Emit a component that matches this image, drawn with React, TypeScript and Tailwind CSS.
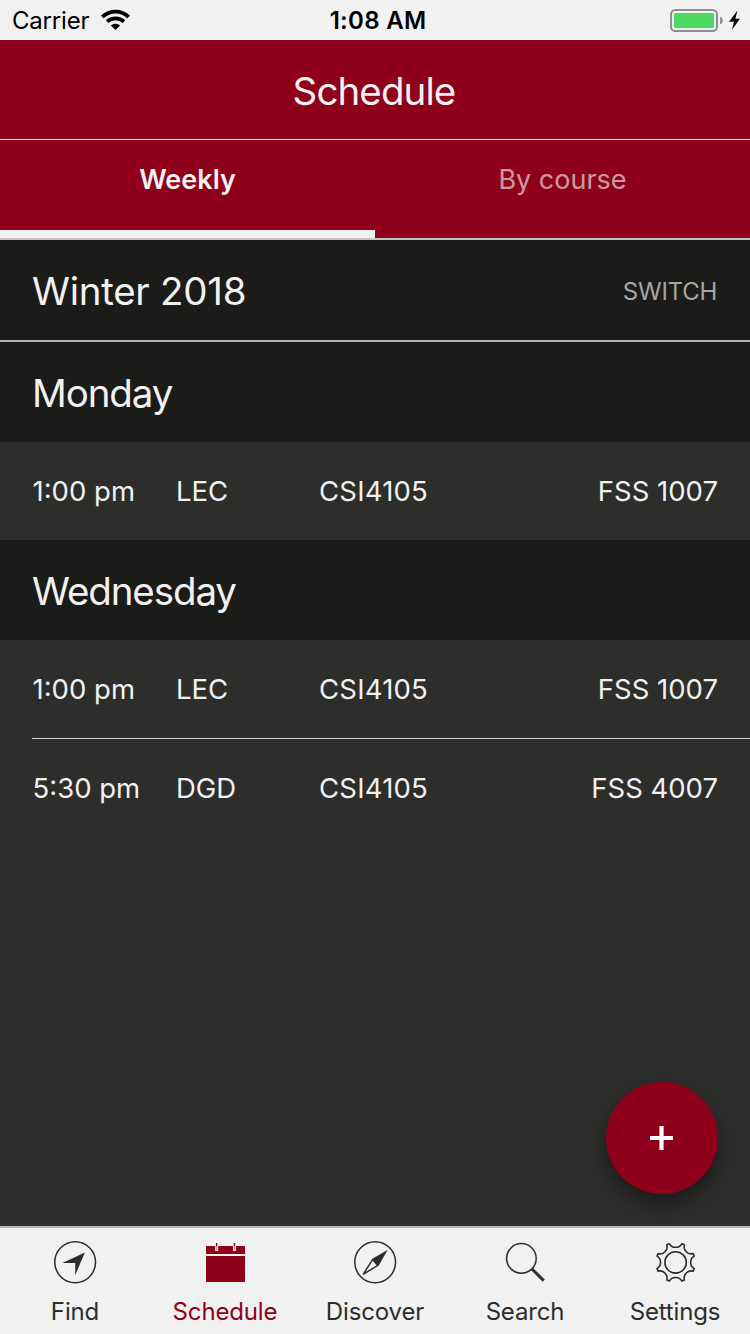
import React from "react";

type Meeting = { time: string; kind: string; course: string; room: string };

const gearPath = (() => {
  const point = (deg: number, r: number) => {
    const a = (deg * Math.PI) / 180;
    return `${(22.6 + r * Math.sin(a)).toFixed(2)} ${(21.4 - r * Math.cos(a)).toFixed(2)}`;
  };
  let d = `M${point(-18.5, 19.6)}`;
  for (let k = 0; k < 8; k++) {
    const v = k * 45;
    d += `Q${point(v - 15, 15.4)} ${point(v, 15.1)}Q${point(v + 15, 15.4)} ${point(v + 18.5, 19.6)}L${point(v + 26.5, 19.6)}`;
  }
  return d + "Z";
})();

function FindIcon() {
  return (
    <svg width="44" height="44" viewBox="0 0 44 44">
      <circle cx="22.15" cy="21.25" r="20.4" fill="none" stroke="#2d2d2c" strokeWidth="1.5" />
      <path d="M31.9 11.5 22.2 34.2V21.9H9.3Z" fill="#2d2d2c" />
    </svg>
  );
}

function CalendarIcon() {
  return (
    <svg width="44" height="44" viewBox="0 0 44 44">
      <path d="M3 5H42V13H3ZM3 15H42V41H3Z" fill="#8f001a" />
      <path d="M12.2 5h3v5h-3ZM30 5h3v5h-3Z" fill="#f1f1f1" />
      <path d="M13.1 5h1.2v4h-1.2ZM30.9 5h1.2v4h-1.2Z" fill="#8f001a" opacity="0.4" />
      <path d="M13 2h1.4v3H13ZM30.8 2h1.4v3h-1.4Z" fill="#8f001a" />
    </svg>
  );
}

function CompassIcon() {
  return (
    <svg width="44" height="44" viewBox="0 0 44 44">
      <circle cx="22.15" cy="21.25" r="20.4" fill="none" stroke="#2d2d2c" strokeWidth="1.5" />
      <path d="M34.8 8.8 25.6 24.8 22 21.5 18.6 18.2Z" fill="#2d2d2c" />
      <path d="M19.6 18.6 10.2 33.3 24.8 24.4 22.2 21.4Z" fill="none" stroke="#2d2d2c" strokeWidth="1.5" />
    </svg>
  );
}

function SearchIcon() {
  return (
    <svg width="44" height="44" viewBox="0 0 44 44">
      <circle cx="18.4" cy="17.4" r="14.8" fill="none" stroke="#2d2d2c" strokeWidth="1.5" />
      <path d="M28.9 28 40.7 39.6" stroke="#2d2d2c" strokeWidth="3" />
    </svg>
  );
}

function GearIcon() {
  return (
    <svg width="44" height="44" viewBox="0 0 44 44">
      <path d={gearPath} fill="none" stroke="#2d2d2c" strokeWidth="1.6" strokeLinejoin="round" />
      <circle cx="22.6" cy="21.4" r="10.7" fill="none" stroke="#2d2d2c" strokeWidth="1.6" />
    </svg>
  );
}

function StatusBar() {
  return (
    <header className="grid h-10 shrink-0 grid-cols-3 items-center bg-[#f1f1f1] text-black">
      <div className="flex items-center pl-3">
        <span className="pt-0.5 text-[24px] leading-[38px] tracking-[-0.2px]">Carrier</span>
        <svg className="ml-3" width="30" height="22" viewBox="0 0 30 22">
          <path d="M1.3 7.9C9 .8 20 .8 27.7 7.9" fill="none" stroke="black" strokeWidth="3.8" />
          <path d="M6 12.6C11 8.3 18 8.3 23 12.6" fill="none" stroke="black" strokeWidth="3.6" />
          <path d="M9.9 16.5C12.7 14.2 16.3 14.2 19.1 16.5L14.5 21Z" fill="black" />
        </svg>
      </div>
      <span className="pl-1.5 pt-0.5 text-center text-[24px] font-semibold leading-[38px] tracking-[0.3px]">1:08 AM</span>
      <div className="flex justify-end pr-2">
        <svg width="74" height="26" viewBox="0 0 74 26">
          <rect x="3" y="3" width="46" height="21" rx="4.5" fill="none" stroke="#8e8e8e" strokeWidth="2" />
          <rect x="6" y="6" width="40" height="15" rx="1.5" fill="#4cd964" />
          <path d="M52 9.5Q55 11 55 13.5T52 17.5Z" fill="#8e8e8e" />
          <path d="M69.5 3.5 61 14.8H66L64 22.8 72 11.8H67.3Z" fill="black" />
        </svg>
      </div>
    </header>
  );
}

function DayHeader({ name }: { name: string }) {
  return (
    <h2 className="h-[100px] bg-[#1b1b1a] px-8 text-[38.5px] font-normal leading-[102px] tracking-[-1.1px]">{name}</h2>
  );
}

function MeetingRow({ time, kind, course, room }: Meeting) {
  return (
    <div className="grid h-[98px] grid-cols-[144px_143px_1fr_auto] px-8 text-[27.5px] leading-[98px]">
      <span className="pl-[0.5px]">{time}</span>
      <span className="tracking-[-0.1px]">{kind}</span>
      <span className="tracking-[0.2px]">{course}</span>
      <span>{room}</span>
    </div>
  );
}

const tabs = [
  { label: "Find", Icon: FindIcon },
  { label: "Schedule", Icon: CalendarIcon, active: true },
  { label: "Discover", Icon: CompassIcon },
  { label: "Search", Icon: SearchIcon },
  { label: "Settings", Icon: GearIcon },
];

export default function App() {
  return (
    <div className="relative flex h-[1334px] w-[750px] flex-col overflow-hidden bg-[#2d2d2c] font-['Inter',sans-serif] text-[#f1f1f1]">
      <StatusBar />
      <h1 className="h-[100px] shrink-0 border-b border-[#f1f1f1] bg-[#8f001a] pr-0.5 text-center text-[38.5px] font-normal leading-[103px] tracking-[-0.9px]">
        Schedule
      </h1>
      <div className="grid h-[100px] shrink-0 grid-cols-2 border-b-2 border-[#c4c4c4] bg-[#8f001a] text-center text-[27px] leading-[79px]">
        <div className="border-b-8 border-[#f1f1f1] font-semibold">Weekly</div>
        <div className="text-[#f1f1f1]/65">By course</div>
      </div>
      <div className="flex h-[102px] shrink-0 items-center justify-between border-b-2 border-[#b4b4b4] bg-[#1b1b1a] px-8">
        <span className="pt-0.5 text-[38.5px] leading-[100px] tracking-[-0.27px]">Winter 2018</span>
        <span className="pt-[3px] pr-px text-[24px] tracking-[-0.25px] text-[#a6a6a5]">SWITCH</span>
      </div>
      <main className="flex-1">
        <DayHeader name="Monday" />
        <MeetingRow time="1:00 pm" kind="LEC" course="CSI4105" room="FSS 1007" />
        <DayHeader name="Wednesday" />
        <MeetingRow time="1:00 pm" kind="LEC" course="CSI4105" room="FSS 1007" />
        <div className="ml-8 h-px bg-[#d0d0d0]" />
        <MeetingRow time="5:30 pm" kind="DGD" course="CSI4105" room="FSS 4007" />
      </main>
      <button
        aria-label="Add"
        className="absolute right-8 bottom-[140px] flex size-28 items-center justify-center rounded-full bg-[#8f001a] shadow-[0_10px_18px_rgba(0,0,0,0.4)]"
      >
        <svg width="24" height="24" viewBox="0 0 24 24">
          <path d="M11.5 0V24M0 12H23" stroke="white" strokeWidth="4.2" />
        </svg>
      </button>
      <nav className="grid h-[108px] shrink-0 grid-cols-5 border-t-2 border-[#b2b2b2] bg-[#f1f1f1]">
        {tabs.map(({ label, Icon, active }) => (
          <div
            key={label}
            className={`flex flex-col items-center pt-[13px] text-[24px] leading-[30px] tracking-[-0.15px] ${active ? "text-[#8f001a]" : "text-[#2d2d2c]"}`}
          >
            <Icon />
            <span className="mt-3">{label}</span>
          </div>
        ))}
      </nav>
    </div>
  );
}
